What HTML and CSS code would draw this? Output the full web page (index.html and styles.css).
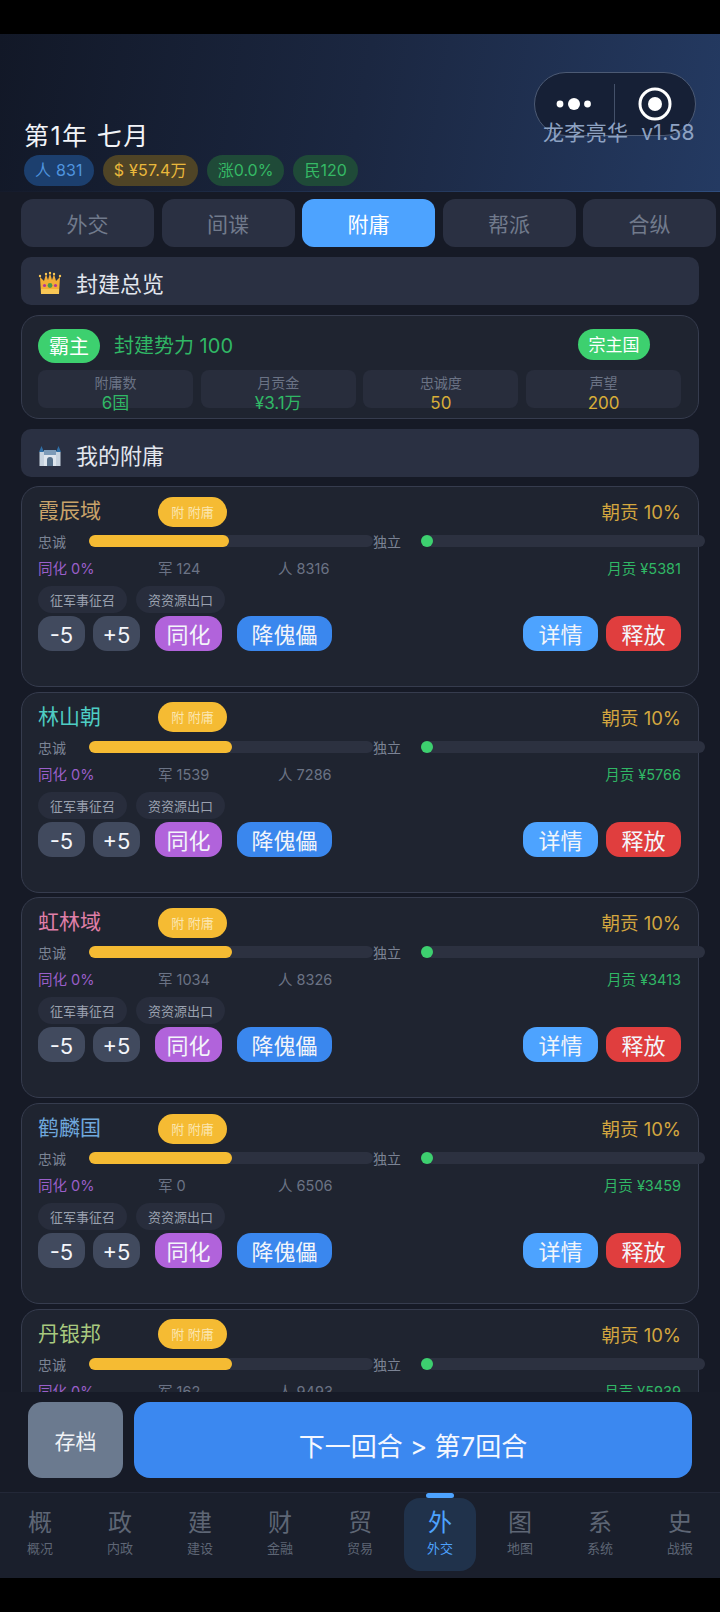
FILE: index.html
```html
<!DOCTYPE html>
<html lang="zh-CN">
<head>
    <meta charset="UTF-8">
    <title>外交</title>
    <link rel="stylesheet" href="styles.css">
</head>
<body>
<div class="app">
    <!--顶部-->
    <div class="header">
        <div class="capsule">
            <div class="capsule-part">
                <svg width="48" height="20" viewBox="0 0 48 20"><circle cx="9" cy="10" r="3.4" fill="#fff"/><circle cx="23" cy="10" r="6" fill="#fff"/><circle cx="36.5" cy="10" r="3.4" fill="#fff"/></svg>
            </div>
            <div class="capsule-line"></div>
            <div class="capsule-part">
                <svg width="34" height="34" viewBox="0 0 34 34"><circle cx="17" cy="17" r="15" fill="none" stroke="#fff" stroke-width="3"/><circle cx="17" cy="17" r="7" fill="#fff"/></svg>
            </div>
        </div>
        <div class="version">龙李亮华&nbsp; v1.58</div>
        <div class="date">第1年 七月</div>
        <div class="pills">
            <span class="pill pill-blue">人 831</span>
            <span class="pill pill-gold">$ ¥57.4万</span>
            <span class="pill pill-green">涨0.0%</span>
            <span class="pill pill-green">民120</span>
        </div>
    </div>

    <!--内容-->
    <div class="main">
        <div class="tabs">
            <div class="tab">外交</div>
            <div class="tab">间谍</div>
            <div class="tab current">附庸</div>
            <div class="tab">帮派</div>
            <div class="tab">合纵</div>
        </div>

        <div class="section">
            <svg class="section-icon" width="24" height="24" viewBox="0 0 24 24">
                <path d="M2 6l4 4 2-7 2 6 2-7 2 7 2-6 2 7 4-4-1 17H3z" fill="#f3ad35"/>
                <circle cx="2" cy="5" r="1.2" fill="#f8c655"/>
                <circle cx="8" cy="3" r="1.2" fill="#f8c655"/>
                <circle cx="12" cy="2" r="1.2" fill="#f8c655"/>
                <circle cx="16" cy="3" r="1.2" fill="#f8c655"/>
                <circle cx="22" cy="5" r="1.2" fill="#f8c655"/>
                <rect x="3" y="18" width="18" height="5" fill="#f8c655"/>
                <circle cx="12" cy="14.5" r="2.4" fill="#4c9a4a"/>
                <circle cx="6.5" cy="14.5" r="1.6" fill="#b0359c"/>
                <circle cx="17.5" cy="14.5" r="1.6" fill="#b0359c"/>
            </svg>
            <span class="section-title">封建总览</span>
        </div>

        <div class="overview">
            <div class="overview-top">
                <span class="lord">霸主</span>
                <span class="power">封建势力 100</span>
                <span class="suzerain">宗主国</span>
            </div>
            <div class="stats">
                <div class="stat"><div class="stat-label">附庸数</div><div class="stat-value green">6国</div></div>
                <div class="stat"><div class="stat-label">月贡金</div><div class="stat-value green">¥3.1万</div></div>
                <div class="stat"><div class="stat-label">忠诚度</div><div class="stat-value gold">50</div></div>
                <div class="stat"><div class="stat-label">声望</div><div class="stat-value gold">200</div></div>
            </div>
        </div>

        <div class="section">
            <svg class="section-icon" width="24" height="24" viewBox="0 0 24 24">
                <rect x="2" y="8" width="20" height="15" fill="#dfe6ee"/>
                <rect x="6" y="7" width="12" height="5" fill="#7d9bb8"/>
                <path d="M1 9l2.5-6L6 9zM18 9l2.5-6L23 9z" fill="#2f6ea5"/>
                <rect x="1.5" y="9" width="4.5" height="14" fill="#c7d3df"/>
                <rect x="18" y="9" width="4.5" height="14" fill="#c7d3df"/>
                <path d="M9 23v-6a3 3 0 0 1 6 0v6z" fill="#56708a"/>
            </svg>
            <span class="section-title">我的附庸</span>
        </div>

        <div class="list">
            <div class="card">
                <div class="card-top">
                    <span class="name name-a">霞辰域</span>
                    <span class="badge">附 附庸</span>
                    <span class="tribute">朝贡 10%</span>
                </div>
                <div class="bars">
                    <span class="bar-label">忠诚</span>
                    <div class="track"><div class="fill" style="width: 140px"></div></div>
                    <span class="bar-mid">独立</span>
                    <div class="track"><div class="dot"></div></div>
                </div>
                <div class="info">
                    <span class="purple">同化 0%</span><span>军 124</span><span>人 8316</span><span class="month">月贡 ¥5381</span>
                </div>
                <div class="tags"><span class="tag">征军事征召</span><span class="tag">资资源出口</span></div>
                <div class="actions">
                    <span class="btn btn-step">-5</span><span class="btn btn-step">+5</span>
                    <span class="btn btn-purple">同化</span><span class="btn btn-blue">降傀儡</span>
                    <span class="btn btn-detail">详情</span><span class="btn btn-red">释放</span>
                </div>
            </div>

            <div class="card">
                <div class="card-top">
                    <span class="name name-b">林山朝</span>
                    <span class="badge">附 附庸</span>
                    <span class="tribute">朝贡 10%</span>
                </div>
                <div class="bars">
                    <span class="bar-label">忠诚</span>
                    <div class="track"><div class="fill" style="width: 143px"></div></div>
                    <span class="bar-mid">独立</span>
                    <div class="track"><div class="dot"></div></div>
                </div>
                <div class="info">
                    <span class="purple">同化 0%</span><span>军 1539</span><span>人 7286</span><span class="month">月贡 ¥5766</span>
                </div>
                <div class="tags"><span class="tag">征军事征召</span><span class="tag">资资源出口</span></div>
                <div class="actions">
                    <span class="btn btn-step">-5</span><span class="btn btn-step">+5</span>
                    <span class="btn btn-purple">同化</span><span class="btn btn-blue">降傀儡</span>
                    <span class="btn btn-detail">详情</span><span class="btn btn-red">释放</span>
                </div>
            </div>

            <div class="card">
                <div class="card-top">
                    <span class="name name-c">虹林域</span>
                    <span class="badge">附 附庸</span>
                    <span class="tribute">朝贡 10%</span>
                </div>
                <div class="bars">
                    <span class="bar-label">忠诚</span>
                    <div class="track"><div class="fill" style="width: 143px"></div></div>
                    <span class="bar-mid">独立</span>
                    <div class="track"><div class="dot"></div></div>
                </div>
                <div class="info">
                    <span class="purple">同化 0%</span><span>军 1034</span><span>人 8326</span><span class="month">月贡 ¥3413</span>
                </div>
                <div class="tags"><span class="tag">征军事征召</span><span class="tag">资资源出口</span></div>
                <div class="actions">
                    <span class="btn btn-step">-5</span><span class="btn btn-step">+5</span>
                    <span class="btn btn-purple">同化</span><span class="btn btn-blue">降傀儡</span>
                    <span class="btn btn-detail">详情</span><span class="btn btn-red">释放</span>
                </div>
            </div>

            <div class="card">
                <div class="card-top">
                    <span class="name name-d">鹤麟国</span>
                    <span class="badge">附 附庸</span>
                    <span class="tribute">朝贡 10%</span>
                </div>
                <div class="bars">
                    <span class="bar-label">忠诚</span>
                    <div class="track"><div class="fill" style="width: 143px"></div></div>
                    <span class="bar-mid">独立</span>
                    <div class="track"><div class="dot"></div></div>
                </div>
                <div class="info">
                    <span class="purple">同化 0%</span><span>军 0</span><span>人 6506</span><span class="month">月贡 ¥3459</span>
                </div>
                <div class="tags"><span class="tag">征军事征召</span><span class="tag">资资源出口</span></div>
                <div class="actions">
                    <span class="btn btn-step">-5</span><span class="btn btn-step">+5</span>
                    <span class="btn btn-purple">同化</span><span class="btn btn-blue">降傀儡</span>
                    <span class="btn btn-detail">详情</span><span class="btn btn-red">释放</span>
                </div>
            </div>

            <div class="card">
                <div class="card-top">
                    <span class="name name-e">丹银邦</span>
                    <span class="badge">附 附庸</span>
                    <span class="tribute">朝贡 10%</span>
                </div>
                <div class="bars">
                    <span class="bar-label">忠诚</span>
                    <div class="track"><div class="fill" style="width: 143px"></div></div>
                    <span class="bar-mid">独立</span>
                    <div class="track"><div class="dot"></div></div>
                </div>
                <div class="info">
                    <span class="purple">同化 0%</span><span>军 162</span><span>人 9493</span><span class="month">月贡 ¥5939</span>
                </div>
            </div>
        </div>
    </div>

    <!--底部按钮-->
    <div class="footer">
        <div class="save">存档</div>
        <div class="next">下一回合 &gt; 第7回合</div>
    </div>

    <!--导航-->
    <div class="nav">
        <div class="nav-item"><div class="nav-big">概</div><div class="nav-small">概况</div></div>
        <div class="nav-item"><div class="nav-big">政</div><div class="nav-small">内政</div></div>
        <div class="nav-item"><div class="nav-big">建</div><div class="nav-small">建设</div></div>
        <div class="nav-item"><div class="nav-big">财</div><div class="nav-small">金融</div></div>
        <div class="nav-item"><div class="nav-big">贸</div><div class="nav-small">贸易</div></div>
        <div class="nav-item current"><div class="nav-big">外</div><div class="nav-small">外交</div></div>
        <div class="nav-item"><div class="nav-big">图</div><div class="nav-small">地图</div></div>
        <div class="nav-item"><div class="nav-big">系</div><div class="nav-small">系统</div></div>
        <div class="nav-item"><div class="nav-big">史</div><div class="nav-small">战报</div></div>
    </div>
</div>
</body>
</html>
```

FILE: styles.css
```css
* {
    margin: 0;
    padding: 0;
    box-sizing: border-box;
}

html, body {
    width: 720px;
    height: 1612px;
    overflow: hidden;
    background: #000;
}

body {
    font-family: Inter, "Noto Sans CJK SC", sans-serif;
    color: #e2e6ee;
}

.app {
    height: 1612px;
    padding: 34px 0;
    display: flex;
    flex-direction: column;
}

/* 顶部 */
.header {
    position: relative;
    height: 158px;
    flex-shrink: 0;
    padding: 85px 24px 0;
    background: linear-gradient(100deg, #121827 0%, #1b2741 50%, #243a62 100%);
    border-bottom: 1px solid;
    border-image: linear-gradient(90deg, #151b2b, #2f4d7e) 1;
}

.capsule {
    position: absolute;
    left: 534px;
    top: 38px;
    width: 162px;
    height: 64px;
    display: flex;
    align-items: center;
    background: #162036;
    border: 1px solid #4c5a74;
    border-radius: 32px;
}

.capsule-part {
    flex: 1;
    display: flex;
    align-items: center;
    justify-content: center;
}

.capsule-line {
    width: 1px;
    height: 40px;
    margin-left: -1px;
    background: #44516a;
}

.version {
    position: absolute;
    right: 25px;
    top: 84px;
    font-size: 21px;
    line-height: 30px;
    letter-spacing: 0.4px;
    color: #8ea2c2;
}

.date {
    font-size: 25px;
    line-height: 34px;
    letter-spacing: 1.4px;
    color: #f2f4f8;
}

.pills {
    display: flex;
    gap: 9px;
    margin-top: 2px;
}

.pill {
    height: 31px;
    line-height: 30px;
    padding: 0 11px;
    font-size: 16px;
    letter-spacing: 0.2px;
    border-radius: 16px;
}

.pill-blue {
    background: #1c3f6e;
    color: #4f94df;
}

.pill-gold {
    background: #4f4426;
    color: #e9b83c;
}

.pill-green {
    background: #1f4a38;
    color: #35b965;
    letter-spacing: 0;
}

/* 内容 */
.main {
    height: 1200px;
    flex-shrink: 0;
    overflow: hidden;
    padding: 7px 21px 0;
    background: #161a26;
}

.tabs {
    display: flex;
    gap: 7.5px;
    height: 48px;
}

.tab {
    width: 133px;
    flex-shrink: 0;
    line-height: 52px;
    text-align: center;
    font-size: 21px;
    color: #717a8c;
    background: #2a3042;
    border-radius: 12px;
}

.tab.current {
    background: #4da3ff;
    color: #fff;
}

.section {
    display: flex;
    align-items: center;
    gap: 14px;
    width: 678px;
    height: 48px;
    margin-top: 10px;
    padding-left: 17px;
    font-size: 22px;
    background: #2a3042;
    border-radius: 10px;
}

.section-icon {
    margin-top: 3px;
}

.section-title {
    padding-top: 2px;
}

.overview {
    width: 678px;
    height: 104px;
    margin-top: 10px;
    padding: 13px 17px 0 16px;
    background: #1f2430;
    border: 1px solid #363c4e;
    border-radius: 18px;
}

.overview-top {
    display: flex;
    align-items: flex-start;
    height: 34px;
}

.lord {
    width: 62px;
    height: 34px;
    line-height: 36px;
    text-align: center;
    font-size: 20px;
    color: #fff;
    background: #3dd06f;
    border-radius: 17px;
}

.power {
    margin-left: 14px;
    font-size: 20px;
    line-height: 35px;
    color: #30b765;
}

.suzerain {
    width: 72px;
    height: 31px;
    line-height: 33px;
    margin-left: auto;
    margin-right: 31px;
    text-align: center;
    font-size: 17px;
    color: #fff;
    background: #3dd06f;
    border-radius: 16px;
}

.stats {
    display: grid;
    grid-template-columns: repeat(4, 155px);
    gap: 7.7px;
    margin-top: 7px;
}

.stat {
    height: 38px;
    text-align: center;
    background: #282d3c;
    border-radius: 8px;
}

.stat-label {
    font-size: 14px;
    line-height: 25px;
    color: #6b7385;
}

.stat-value {
    font-size: 17px;
    line-height: 16px;
}

.green {
    color: #30b765;
}

.gold {
    color: #d9ae38;
}

.list {
    display: flex;
    flex-direction: column;
    gap: 4.7px;
    margin-top: 9px;
}

.card {
    width: 678px;
    height: 201px;
    flex-shrink: 0;
    padding: 8px 17px 0 16px;
    background: #1f2430;
    border: 1px solid #363c4e;
    border-radius: 18px;
}

.card-top {
    display: grid;
    grid-template-columns: 120px auto 1fr;
    align-items: center;
    height: 33px;
}

.name {
    font-size: 21px;
    line-height: 28px;
    margin-top: -1px;
}

.name-a {
    color: #c9a36a;
}

.name-b {
    color: #4ecdc4;
}

.name-c {
    color: #e07fa8;
}

.name-d {
    color: #6fa8dc;
}

.name-e {
    color: #a8c97f;
}

.badge {
    width: 69px;
    height: 30px;
    line-height: 30px;
    text-align: center;
    font-size: 13px;
    color: #fbe6b0;
    background: #f5bb33;
    border-radius: 15px;
}

.tribute {
    padding-top: 2px;
    text-align: right;
    font-size: 18.5px;
    line-height: 31px;
    color: #d3a63f;
}

.bars {
    display: flex;
    align-items: center;
    height: 16px;
    margin-top: 5px;
    width: 670px;
}

.bar-label {
    width: 51px;
    flex-shrink: 0;
    font-size: 14px;
    color: #7b8394;
}

.track {
    position: relative;
    width: 284px;
    height: 12px;
    flex-shrink: 0;
    background: #2c3140;
    border-radius: 6px;
}

.fill {
    height: 12px;
    background: #f5bb33;
    border-radius: 6px;
}

.dot {
    position: absolute;
    left: 0;
    top: 0;
    width: 12px;
    height: 12px;
    background: #3dd06f;
    border-radius: 50%;
}

.bar-mid {
    width: 48px;
    flex-shrink: 0;
    font-size: 14px;
    color: #7b8394;
}

.info {
    display: grid;
    grid-template-columns: 120px 120px 1fr auto;
    margin-top: 8px;
    font-size: 14.5px;
    line-height: 24px;
    color: #6b7385;
}

.purple {
    color: #9a5fc9;
}

.month {
    color: #30b765;
}

.tags {
    display: flex;
    gap: 9px;
    margin-top: 5px;
}

.tag {
    width: 89px;
    height: 27px;
    line-height: 28px;
    text-align: center;
    font-size: 13px;
    color: #9aa1af;
    background: #282d3c;
    border-radius: 14px;
}

.actions {
    display: flex;
    gap: 8px;
    margin-top: 3px;
}

.btn {
    height: 35px;
    line-height: 38px;
    text-align: center;
    font-size: 22px;
    color: #f3f5fa;
    border-radius: 14px;
}

.btn-step {
    width: 47px;
    background: #414a5e;
}

.btn-purple {
    width: 67px;
    margin-left: 7px;
    background: #b163db;
}

.btn-blue {
    width: 95px;
    margin-left: 7px;
    background: #3a87ee;
}

.btn-detail {
    width: 75px;
    margin-left: auto;
    background: #4da3ff;
}

.btn-red {
    width: 75px;
    background: #e03e3e;
}

/* 底部按钮 */
.footer {
    display: flex;
    gap: 11px;
    height: 100px;
    flex-shrink: 0;
    padding: 10px 28px 0;
    background: #171b27;
}

.save {
    width: 95px;
    height: 76px;
    line-height: 80px;
    text-align: center;
    font-size: 21px;
    color: #f0f2f6;
    background: #6b7a8f;
    border-radius: 14px;
}

.next {
    flex: 1;
    height: 76px;
    line-height: 90px;
    text-align: center;
    font-size: 26px;
    color: #f5f8ff;
    background: #3b88f0;
    border-radius: 16px;
}

/* 导航 */
.nav {
    display: flex;
    height: 86px;
    flex-shrink: 0;
    background: #1a1f2c;
    border-top: 1px solid #232838;
}

.nav-item {
    position: relative;
    width: 80px;
    height: 79px;
    margin-top: 5px;
    text-align: center;
    color: #5e6675;
}

.nav-item.current {
    color: #4da3ff;
}

.nav-item.current::before {
    content: "";
    position: absolute;
    left: 4px;
    top: 0;
    width: 72px;
    height: 73px;
    background: #20324b;
    border-radius: 16px;
}

.nav-item.current::after {
    content: "";
    position: absolute;
    left: 26px;
    top: -5px;
    width: 28px;
    height: 5px;
    background: #4da3ff;
    border-radius: 3px;
}

.nav-big {
    position: relative;
    z-index: 1;
    padding-top: 8px;
    font-size: 24px;
    line-height: 34px;
}

.nav-small {
    position: relative;
    z-index: 1;
    font-size: 13px;
    line-height: 17px;
}
```
